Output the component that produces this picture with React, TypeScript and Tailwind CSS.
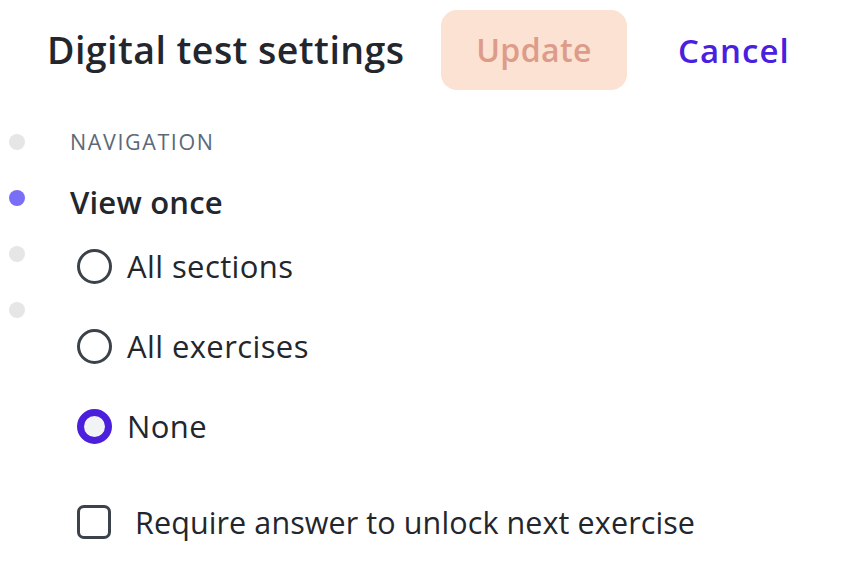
import React from "react";

const OS = { fontFamily: "'Open Sans', 'Noto Sans', sans-serif" };

function Radio({ checked, label }: { checked?: boolean; label: string }) {
  return (
    <div className="flex items-center h-[40px]">
      {checked ? (
        <div className="w-[35px] h-[35px] rounded-full border-[7px] border-[#4b1fdc] bg-[#f2f3f5] box-border shrink-0" />
      ) : (
        <div className="w-[35px] h-[35px] rounded-full border-[3.5px] border-[#3b4249] bg-white box-border shrink-0" />
      )}
      <span className="ml-[15px] text-[31px] tracking-[0.4px] text-[#23262c] leading-none whitespace-nowrap" style={OS}>
        {label}
      </span>
    </div>
  );
}

export default function App() {
  return (
    <div className="w-[842px] h-[572px] bg-white relative overflow-hidden" style={OS}>
      <div className="flex items-center pt-[10px] h-[90px]">
        <div className="w-[441px] pl-[47px] shrink-0">
          <h1 className="text-[37.5px] font-semibold text-[#23262c] tracking-[0.45px] leading-none whitespace-nowrap">
            Digital test settings
          </h1>
        </div>
        <button className="w-[186px] h-[80px] rounded-[16px] bg-[#fbe2d2] text-[#dd9b89] text-[32px] tracking-[0.4px] font-semibold leading-none shrink-0">
          Update
        </button>
        <button className="ml-[51px] text-[33px] tracking-[1px] font-semibold text-[#4a20df] leading-none">
          Cancel
        </button>
      </div>

      <div className="flex">
        <div className="flex flex-col items-center w-[34px] pt-[44px] gap-[40px] shrink-0">
          <div className="w-[16px] h-[16px] rounded-full bg-[#e6e6e6]" />
          <div className="w-[16px] h-[16px] rounded-full bg-[#7a6ef6]" />
          <div className="w-[16px] h-[16px] rounded-full bg-[#e6e6e6]" />
          <div className="w-[16px] h-[16px] rounded-full bg-[#e6e6e6]" />
        </div>
        <div className="ml-[36px] flex flex-col">
          <div className="mt-[36px] h-[32px] flex items-center">
            <span className="text-[21.5px] text-[#5b6978] tracking-[1.6px] leading-none">NAVIGATION</span>
          </div>
          <div className="mt-[28px] h-[32px] flex items-center">
            <span className="text-[31px] font-semibold text-[#23262c] tracking-[0.2px] leading-none whitespace-nowrap">View once</span>
          </div>
          <div className="ml-[7px] mt-[28px] flex flex-col gap-[40px]">
            <Radio label="All sections" />
            <Radio label="All exercises" />
            <Radio checked label="None" />
          </div>
          <div className="ml-[7px] mt-[56px] h-[40px] flex items-center">
            <div className="w-[34px] h-[34px] rounded-[7px] border-[3.5px] border-[#3b4249] box-border shrink-0" />
            <span className="ml-[24px] text-[30.5px] tracking-[0.1px] text-[#23262c] leading-none whitespace-nowrap">
              Require answer to unlock next exercise
            </span>
          </div>
        </div>
      </div>
    </div>
  );
}
